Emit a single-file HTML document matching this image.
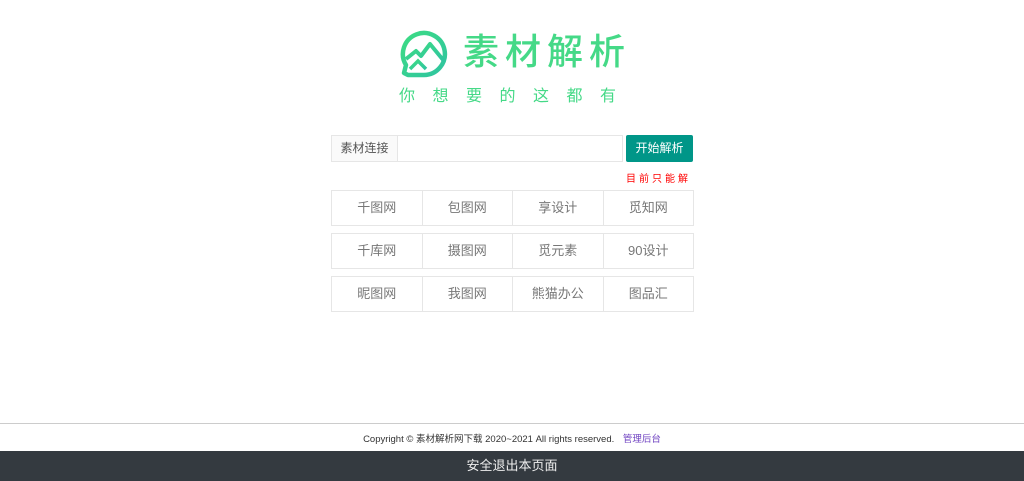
<!DOCTYPE html>
<html><head><meta charset="utf-8"><style>
*{margin:0;padding:0;box-sizing:border-box}
body{width:1024px;height:481px;background:#fff;position:relative;font-family:"Liberation Sans","Noto Sans CJK SC",sans-serif;overflow:hidden}
.abs{position:absolute}
.title{left:463px;top:30px;font-size:36px;color:#45d987;letter-spacing:6px;font-weight:500;line-height:44px}
.sub{left:399px;top:87px;font-size:16px;color:#45d987;letter-spacing:17.5px;line-height:20px;white-space:nowrap}
.lab{left:331px;top:135px;width:67px;height:27px;border:1px solid #e6e6e6;background:#fafafa;font-size:12px;color:#555;text-align:center;line-height:25px}
.inp{left:397px;top:135px;width:226px;height:27px;border:1px solid #e6e6e6}
.btn{left:626px;top:135px;width:67px;height:27px;background:#009688;color:#fff;font-size:12px;text-align:center;line-height:27px;border-radius:2px}
.red{left:626px;top:170px;font-size:10px;color:#f00;letter-spacing:3px}
.row{left:331px;width:363px;height:36px;border:1px solid #e6e6e6;display:flex}
.row div{flex:1;text-align:center;line-height:34px;font-size:13px;color:#777;border-left:1px solid #e6e6e6}
.row div:first-child{border-left:none}
.line{left:0;top:423px;width:1024px;height:1px;background:#ccc}
.copy{left:0;width:1024px;top:431px;text-align:center;font-size:9.5px;color:#333}
.copy span{color:#6f42c1;margin-left:6px}
.bar{left:0;top:451px;width:1024px;height:30px;background:#343a40;color:#eee;text-align:center;line-height:30px;font-size:13px}
</style></head><body>
<svg class="abs" style="left:400px;top:29px" width="48" height="50" viewBox="0 0 48 50">
<defs><linearGradient id="g" x1="0" y1="0" x2="1" y2="1"><stop offset="0" stop-color="#3ddc84"/><stop offset="1" stop-color="#2fc4a0"/></linearGradient></defs>
<path d="M8 46 L24 46 A21 21 0 1 0 6 36 L4 44 Z" fill="none" stroke="url(#g)" stroke-width="4.5" stroke-linejoin="round"/>
<path d="M6 30 L16 22 L21 27 L30 15 L44 32" fill="none" stroke="url(#g)" stroke-width="4" stroke-linejoin="round"/>
<path d="M10 40 L18 32 L26 40" fill="none" stroke="url(#g)" stroke-width="3.5"/>
</svg>
<div class="abs title">素材解析</div>
<div class="abs sub">你想要的这都有</div>
<div class="abs lab">素材连接</div>
<div class="abs inp"></div>
<div class="abs btn">开始解析</div>
<div class="abs red">目前只能解</div>
<div class="abs row" style="top:190px"><div>千图网</div><div>包图网</div><div>享设计</div><div>觅知网</div></div>
<div class="abs row" style="top:233px"><div>千库网</div><div>摄图网</div><div>觅元素</div><div>90设计</div></div>
<div class="abs row" style="top:276px"><div>昵图网</div><div>我图网</div><div>熊猫办公</div><div>图品汇</div></div>
<div class="abs line"></div>
<div class="abs copy">Copyright © 素材解析网下载 2020~2021 All rights reserved. <span>管理后台</span></div>
<div class="abs bar">安全退出本页面</div>
</body></html>
